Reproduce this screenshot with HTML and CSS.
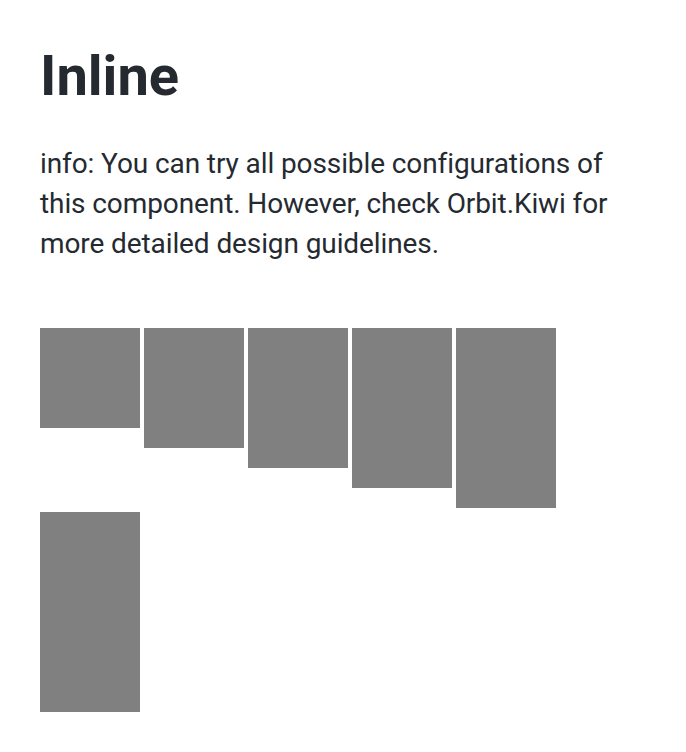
FILE: index.html
```html
<!DOCTYPE html>
<html>
<head>
<meta charset="utf-8">
<link rel="stylesheet" href="styles.css">
</head>
<body>
<main class="page">
  <h1 class="title">Inline</h1>
  <p class="info">info: You can try all possible configurations of this component. However, check Orbit.Kiwi for more detailed design guidelines.</p>
  <div class="inline">
    <div class="box h100"></div>
    <div class="box h120"></div>
    <div class="box h140"></div>
    <div class="box h160"></div>
    <div class="box h180"></div>
    <div class="box h200"></div>
  </div>
</main>
</body>
</html>
```
FILE: styles.css
```css
html, body { margin: 0; padding: 0; background: #fff; }
.page {
  padding: 40px;
  font-family: Roboto, "Liberation Sans", sans-serif;
  color: #252a31;
}
.title {
  margin: 0;
  font-size: 56px;
  font-weight: 700;
  line-height: 72px;
}
.info {
  margin: 32px 0 0;
  font-size: 28px;
  letter-spacing: -0.1px;
  line-height: 40px;
}
.inline {
  margin-top: 64px;
  display: flex;
  flex-wrap: wrap;
  gap: 4px;
  align-items: flex-start;
}
.box { width: 100px; background: #808080; }
.h100 { height: 100px; }
.h120 { height: 120px; }
.h140 { height: 140px; }
.h160 { height: 160px; }
.h180 { height: 180px; }
.h200 { height: 200px; }
```
